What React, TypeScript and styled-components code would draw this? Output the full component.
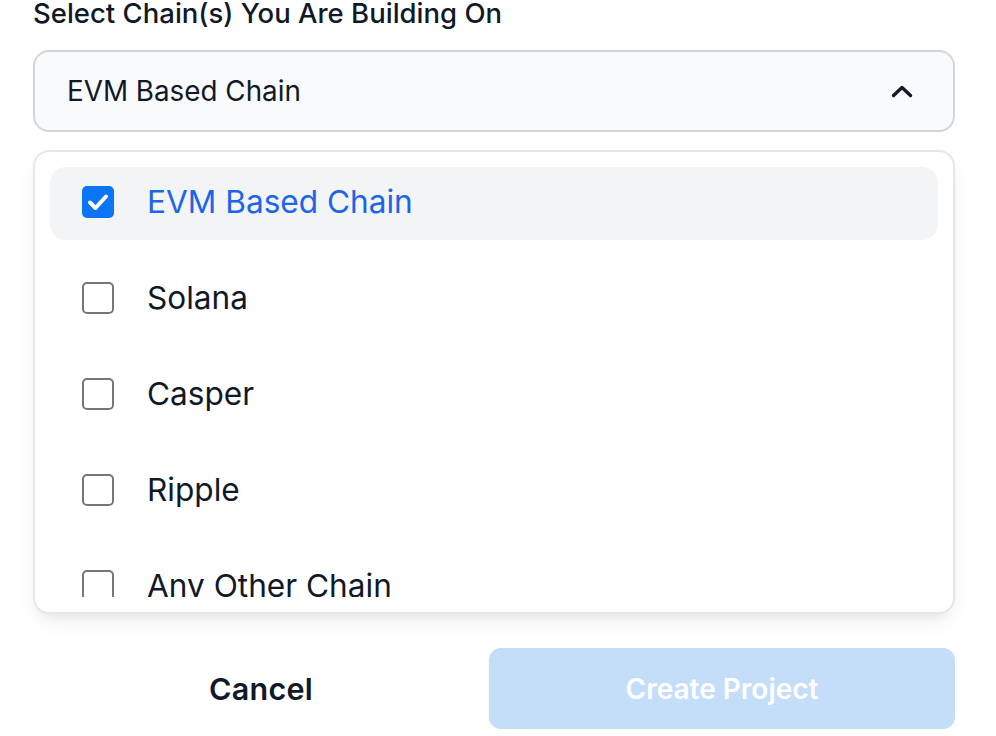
import React from "react";
import styled, { createGlobalStyle } from "styled-components";

const Global = createGlobalStyle`
  html, body { margin: 0; padding: 0; background: #ffffff; }
  body { font-family: Inter, "Noto Sans", "Liberation Sans", sans-serif; color: #111827; }
  * { box-sizing: border-box; }
`;

const Page = styled.div`
  width: 996px;
  height: 736px;
  overflow: hidden;
  padding: 0 41px 0 33px;
  display: flex;
  flex-direction: column;
`;

const Label = styled.div`
  flex: none;
  font-size: 27.5px;
  font-weight: 500;
  line-height: 26px;
  color: #111827;
  height: 50px;
  white-space: nowrap;
`;

const SelectBox = styled.div`
  flex: none;
  height: 82px;
  border: 2px solid #d1d5db;
  border-radius: 16px;
  background: #f9fafb;
  display: flex;
  align-items: center;
  justify-content: space-between;
  padding: 0 40px 0 32px;
  font-size: 27.8px;
  color: #111827;
`;

const Panel = styled.div`
  flex: none;
  margin-top: 18px;
  height: 464px;
  border: 2px solid #e5e7eb;
  border-radius: 16px;
  background: #ffffff;
  box-shadow: 0 10px 25px -5px rgba(0, 0, 0, 0.08), 0 8px 10px -6px rgba(0, 0, 0, 0.06);
  padding: 15px;
  display: flex;
  flex-direction: column;
`;

const List = styled.div`
  flex: 1;
  overflow: hidden;
  display: flex;
  flex-direction: column;
  gap: 23px;
`;

const Item = styled.div<{ $active?: boolean }>`
  flex: none;
  height: 73px;
  border-radius: 16px;
  background: ${(p) => (p.$active ? "#f3f4f6" : "transparent")};
  display: flex;
  align-items: center;
  padding: 0 32px;
  gap: 33px;
  font-size: 31.6px;
  color: ${(p) => (p.$active ? "#1d64e8" : "#111827")};
`;

const Box = styled.span<{ $checked?: boolean }>`
  width: 32px;
  height: 32px;
  flex: none;
  border-radius: 5px;
  border: ${(p) => (p.$checked ? "none" : "2px solid #767676")};
  background: ${(p) => (p.$checked ? "#0b75f5" : "#ffffff")};
  display: flex;
  align-items: center;
  justify-content: center;
  position: relative;
  top: -2px;
`;

const ItemText = styled.span`
  position: relative;
  top: -2px;
  white-space: nowrap;
`;

const Footer = styled.div`
  flex: none;
  display: flex;
  align-items: center;
  margin-top: 34px;
`;

const CancelButton = styled.button`
  width: 456px;
  height: 81px;
  border: none;
  background: transparent;
  font-family: inherit;
  font-size: 30.5px;
  font-weight: 600;
  letter-spacing: 0.3px;
  color: #111827;
`;

const CreateButton = styled.button`
  flex: 1;
  height: 81px;
  border: none;
  border-radius: 12px;
  background: #c4ddf9;
  font-family: inherit;
  font-size: 28px;
  font-weight: 600;
  color: #ffffff;
`;

const chains = ["EVM Based Chain", "Solana", "Casper", "Ripple", "Any Other Chain"];

export default function App() {
  return (
    <>
      <Global />
      <Page>
        <Label>Select Chain(s) You Are Building On</Label>
        <SelectBox>
          <span>EVM Based Chain</span>
          <svg width="22" height="14" viewBox="0 0 22 14" fill="none">
            <path d="M2.5 11.5 L11 3.5 L19.5 11.5" stroke="#111827" strokeWidth="3.4" strokeLinecap="round" strokeLinejoin="round" />
          </svg>
        </SelectBox>
        <Panel>
          <List>
            {chains.map((c, i) => (
              <Item key={c} $active={i === 0}>
                <Box $checked={i === 0}>
                  {i === 0 && (
                    <svg width="22" height="18" viewBox="0 0 22 18" fill="none">
                      <path d="M3 9.5 L8.5 15 L19 3.5" stroke="#ffffff" strokeWidth="4" strokeLinecap="round" strokeLinejoin="round" />
                    </svg>
                  )}
                </Box>
                <ItemText>{c}</ItemText>
              </Item>
            ))}
          </List>
        </Panel>
        <Footer>
          <CancelButton>Cancel</CancelButton>
          <CreateButton>Create Project</CreateButton>
        </Footer>
      </Page>
    </>
  );
}
